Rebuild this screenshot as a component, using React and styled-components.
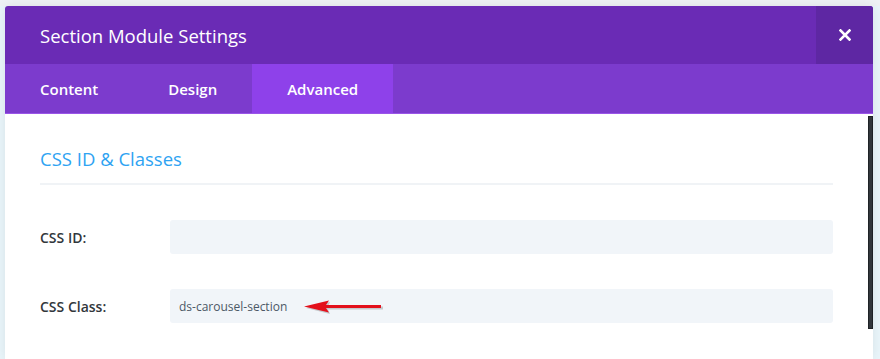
import styled, { createGlobalStyle } from "styled-components";

const GlobalStyle = createGlobalStyle`
  html, body {
    margin: 0;
    padding: 0;
    background: #e9f5fa;
    font-family: "Open Sans", "Liberation Sans", sans-serif;
    overflow: hidden;
  }
`;

const Page = styled.div`
  padding: 6px 0 0 5px;
  height: 359px;
  box-sizing: border-box;
  background: linear-gradient(#eef2f5 0, #eef2f5 6px, #e9f5fa 6px);
`;

const Modal = styled.div`
  width: 868px;
  display: flex;
  flex-direction: column;
  border-radius: 3px 3px 0 0;
  overflow: hidden;
  box-shadow: 0 0 12px rgba(0, 0, 0, 0.08);
`;

const Header = styled.div`
  height: 58px;
  display: flex;
  align-items: center;
  background: #6a2bb5;
`;

const Title = styled.h1`
  flex: 1;
  margin: 0;
  padding-left: 35px;
  font-size: 18.5px;
  font-weight: 400;
  color: #ffffff;
`;

const CloseButton = styled.button`
  width: 57px;
  height: 100%;
  border: none;
  background: #5e27a3;
  display: flex;
  align-items: center;
  justify-content: center;
  padding: 0;
  cursor: pointer;
`;

const Tabs = styled.div`
  display: flex;
  height: 49px;
  background: #7c3bcd;
  border-bottom: 1px solid #9a55e8;
`;

const Tab = styled.div`
  display: flex;
  align-items: center;
  padding: 0 35px;
  font-size: 15px;
  font-weight: 600;
  color: #ffffff;
  background: ${(p) => (p.$active ? "#8e41ea" : "transparent")};
`;

const BodyRow = styled.div`
  display: flex;
  background: #ffffff;
  height: 245px;
`;

const Content = styled.div`
  flex: 1;
  padding: 33px 35px 0 35px;
`;

const ScrollTrack = styled.div`
  width: 5px;
  padding-top: 2px;
`;

const ScrollThumb = styled.div`
  height: 213px;
  background: #31363b;
  border: 1px solid #1e2226;
  box-sizing: border-box;
`;

const SectionTitle = styled.h2`
  margin: 0;
  font-size: 18.5px;
  line-height: 24px;
  font-weight: 400;
  color: #2ea3f2;
  padding-bottom: 12px;
  border-bottom: 2px solid #f0f3f6;
`;

const Fields = styled.div`
  display: flex;
  flex-direction: column;
  gap: 35px;
  padding-top: 35px;
`;

const FieldRow = styled.div`
  display: flex;
  align-items: center;
`;

const Label = styled.label`
  width: 130px;
  font-size: 14px;
  font-weight: 600;
  color: #32373c;
`;

const InputWrap = styled.div`
  position: relative;
  flex: 1;
`;

const Input = styled.div`
  height: 34px;
  border-radius: 3px;
  background: #f1f5f9;
  display: flex;
  align-items: center;
  padding-left: 9px;
  font-size: 12px;
  color: #4c5866;
`;

const Arrow = styled.svg`
  position: absolute;
  left: 133px;
  top: 10px;
`;

function CloseIcon() {
  return (
    <svg width="12" height="12" viewBox="0 0 12 12">
      <path
        d="M1.5 1.5 L10.5 10.5 M10.5 1.5 L1.5 10.5"
        stroke="#ffffff"
        strokeWidth="2.6"
        strokeLinecap="square"
      />
    </svg>
  );
}

export default function App() {
  return (
    <>
      <GlobalStyle />
      <Page>
        <Modal>
          <Header>
            <Title>Section Module Settings</Title>
            <CloseButton>
              <CloseIcon />
            </CloseButton>
          </Header>
          <Tabs>
            <Tab>Content</Tab>
            <Tab>Design</Tab>
            <Tab $active>Advanced</Tab>
          </Tabs>
          <BodyRow>
            <Content>
              <SectionTitle>CSS ID &amp; Classes</SectionTitle>
              <Fields>
                <FieldRow>
                  <Label>CSS ID:</Label>
                  <InputWrap>
                    <Input />
                  </InputWrap>
                </FieldRow>
                <FieldRow>
                  <Label>CSS Class:</Label>
                  <InputWrap>
                    <Input>ds-carousel-section</Input>
                    <Arrow width="82" height="16" viewBox="0 0 82 16">
                      <path
                        d="M3 9 L27 3 L25 7.5 L80 7.5 L80 10.5 L25 10.5 L27 15 Z"
                        fill="rgba(0,0,0,0.18)"
                      />
                      <path
                        d="M1 7.5 L26 1.5 L23 6 L78 6 L78 9 L23 9 L26 13.5 Z"
                        fill="#e3101b"
                      />
                    </Arrow>
                  </InputWrap>
                </FieldRow>
              </Fields>
            </Content>
            <ScrollTrack>
              <ScrollThumb />
            </ScrollTrack>
          </BodyRow>
        </Modal>
      </Page>
    </>
  );
}
